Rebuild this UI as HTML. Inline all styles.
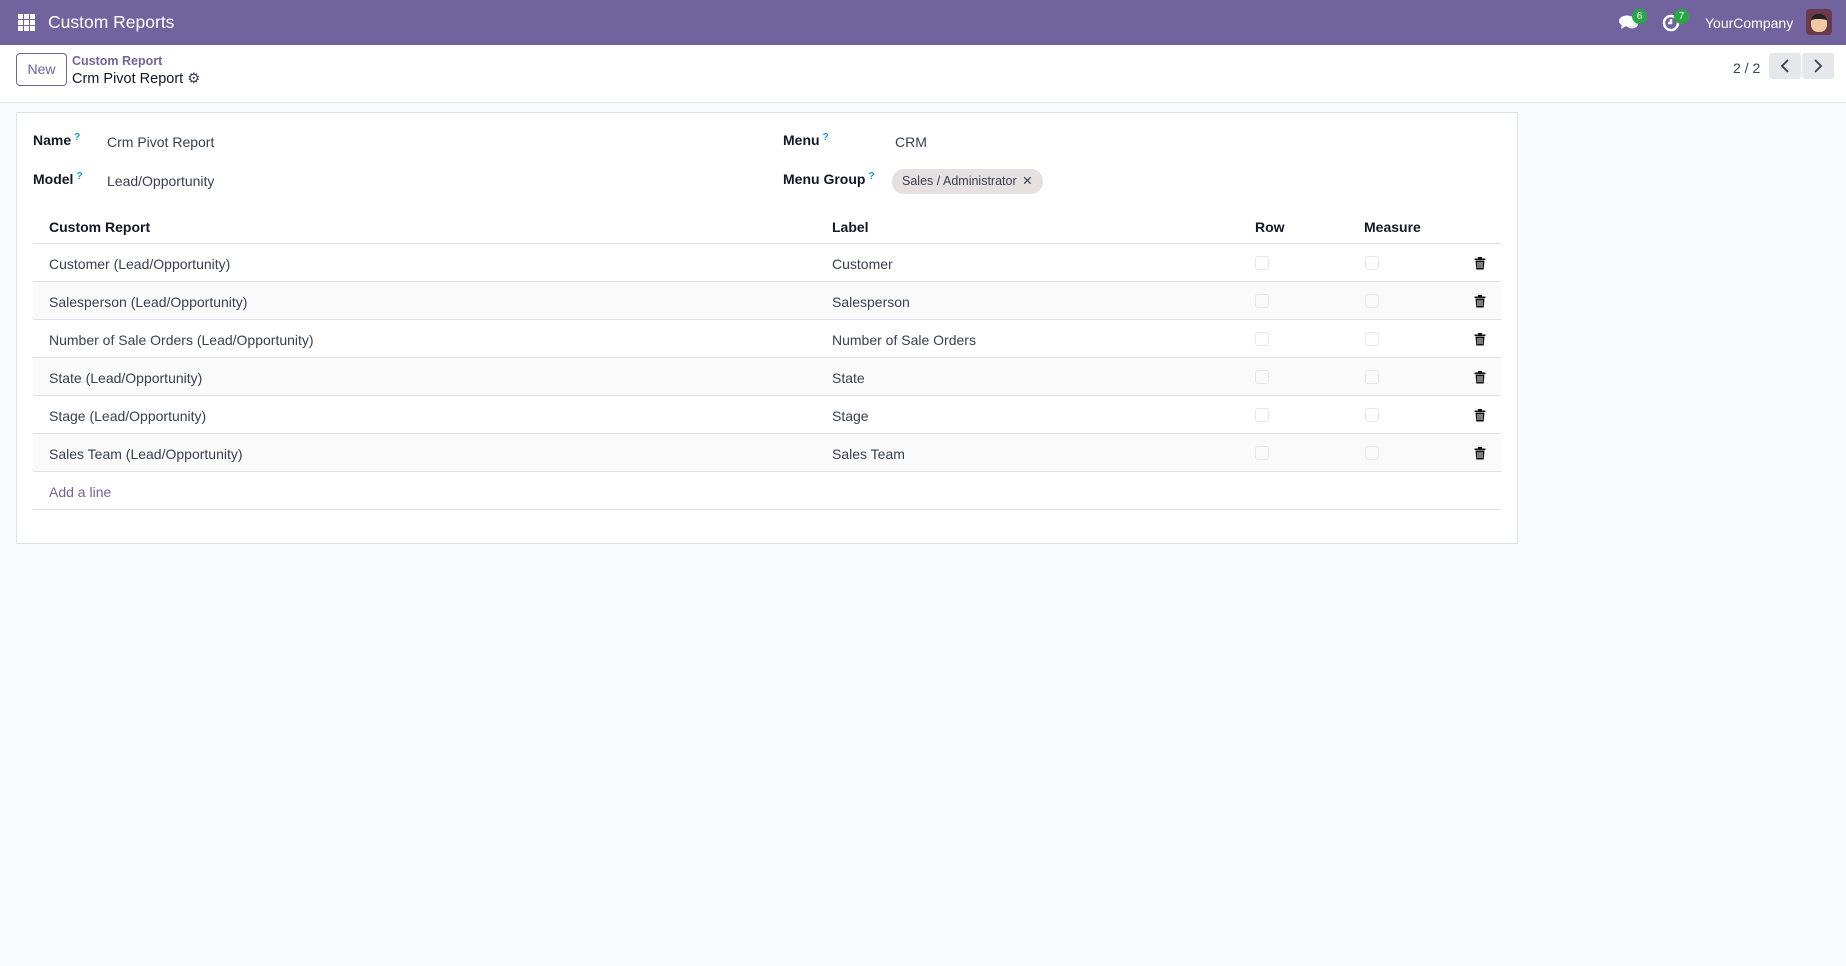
<!DOCTYPE html>
<html><head><meta charset="utf-8"><style>
*{box-sizing:border-box;margin:0;padding:0}
body{width:1846px;height:966px;background:#f9fafb;font-family:"Liberation Sans",sans-serif;color:#374151;font-size:14px;position:relative;overflow:hidden}
.nav{position:absolute;left:0;top:0;width:1846px;height:45px;background:#71639e;color:#fff}
.abs{position:absolute}
.cp{position:absolute;left:0;top:45px;width:1846px;height:58px;background:#fff;border-bottom:1px solid #e5e7eb}
.card{position:absolute;left:16px;top:112px;width:1502px;height:432px;background:#fff;border:1px solid #dee2e6}
.lbl{font-weight:bold;color:#111827;font-size:14px}
.q{color:#0b9bd1;font-size:10px;vertical-align:top;margin-left:3px}
.row{position:absolute;left:33px;width:1468px;height:38px;border-bottom:1px solid #dee2e6}
.row span{position:absolute;top:12px}
.cb{position:absolute;top:12px;width:14px;height:14px;border:1px solid #e5e7eb;border-radius:3px}
.tr{position:absolute;left:1441px;top:12px}
.badge{position:absolute;background:#28a745;color:#fff;font-size:10px;border-radius:8px;width:15px;height:15px;text-align:center;line-height:15px}
.pg{position:absolute;top:53px;width:32px;height:26px;background:#e5e7eb;border-radius:3px}
</style></head><body>
<svg width="0" height="0" style="position:absolute"><defs><symbol id="t" viewBox="0 0 12 14"><path d="M4 1h4v1.5H4z M0.5 2.5h11v1.5h-11z M1.5 4.5h9l-0.8 9h-7.4z" fill="#111"/><path d="M4 6v6M6 6v6M8 6v6" stroke="#fff" stroke-width="0.9"/></symbol></defs></svg>
<div class="nav">
 <svg class="abs" style="left:18px;top:14px" width="17" height="17" viewBox="0 0 17 17" fill="#fff"><rect x="0" y="0" width="5" height="5"/><rect x="6" y="0" width="5" height="5"/><rect x="12" y="0" width="5" height="5"/><rect x="0" y="6" width="5" height="5"/><rect x="6" y="6" width="5" height="5"/><rect x="12" y="6" width="5" height="5"/><rect x="0" y="12" width="5" height="5"/><rect x="6" y="12" width="5" height="5"/><rect x="12" y="12" width="5" height="5"/></svg>
 <div class="abs" style="left:48px;top:12px;font-size:17.5px">Custom Reports</div>
 <svg class="abs" style="left:1619px;top:14px" width="20" height="17" viewBox="0 0 20 17" fill="#fff"><ellipse cx="8" cy="7" rx="8" ry="5.5"/><path d="M3 10 L2 15 L7 12Z"/><ellipse cx="13" cy="10" rx="6" ry="4.5" opacity=".85"/></svg>
 <div class="badge" style="left:1632px;top:9px">6</div>
 <svg class="abs" style="left:1662px;top:14px" width="18" height="18" viewBox="0 0 18 18" fill="none" stroke="#fff" stroke-width="2.5"><circle cx="9" cy="9" r="7"/><path d="M9 5v4h-3"/></svg>
 <div class="badge" style="left:1674px;top:9px">7</div>
 <div class="abs" style="left:1705px;top:15px;font-size:14px">YourCompany</div>
 <div class="abs" style="left:1806px;top:9px;width:26px;height:26px;border-radius:4px;background:#6b3a4a"><div style="margin:5px auto 0;width:16px;height:18px;border-radius:7px;background:#f1c9a5;border-top:5px solid #222"></div></div>
</div>
<div class="cp">
 <div class="abs" style="left:16px;top:8px;width:51px;height:33px;border:1px solid #71639e;border-radius:4px;color:#71639e;text-align:center;line-height:31px;font-size:14px">New</div>
 <div class="abs" style="left:72px;top:9px;color:#71639e;font-weight:bold;font-size:12.5px">Custom Report</div>
 <div class="abs" style="left:72px;top:26px;color:#111827;font-size:14.5px">Crm Pivot Report <span style="color:#374151">⚙</span></div>
 <div class="abs" style="left:1733px;top:15px;color:#374151;font-size:14px">2 / 2</div>
</div>
<div class="pg" style="left:1769px"><svg width="32" height="26" viewBox="0 0 32 26"><path d="M19 7l-6 6 6 6" fill="none" stroke="#374151" stroke-width="1.8"/></svg></div>
<div class="pg" style="left:1802px"><svg width="32" height="26" viewBox="0 0 32 26"><path d="M13 7l6 6-6 6" fill="none" stroke="#374151" stroke-width="1.8"/></svg></div>
<div class="card"></div>
<div class="abs lbl" style="left:33px;top:132px">Name<span class="q">?</span></div>
<div class="abs" style="left:107px;top:134px">Crm Pivot Report</div>
<div class="abs lbl" style="left:33px;top:171px">Model<span class="q">?</span></div>
<div class="abs" style="left:107px;top:173px">Lead/Opportunity</div>
<div class="abs lbl" style="left:783px;top:132px">Menu<span class="q">?</span></div>
<div class="abs" style="left:895px;top:134px">CRM</div>
<div class="abs lbl" style="left:783px;top:171px">Menu Group<span class="q">?</span></div>
<div class="abs" style="left:892px;top:169px;width:151px;height:25px;border-radius:12px;background:#e7e0e0;font-size:12.5px;color:#374151;line-height:25px;padding-left:10px">Sales / Administrator <span style="margin-left:2px">✕</span></div>
<div class="row" style="top:206px;height:38px"><span class="lbl" style="left:16px;top:13px">Custom Report</span><span class="lbl" style="left:799px;top:13px">Label</span><span class="lbl" style="left:1222px;top:13px">Row</span><span class="lbl" style="left:1331px;top:13px">Measure</span></div>
<div class="row" style="top:244px"><span style="left:16px">Customer (Lead/Opportunity)</span><span style="left:799px">Customer</span><i class="cb" style="left:1222px"></i><i class="cb" style="left:1332px"></i><svg class="tr" width="12" height="14"><use href="#t"/></svg></div>
<div class="row" style="top:282px;background:#fafafa"><span style="left:16px">Salesperson (Lead/Opportunity)</span><span style="left:799px">Salesperson</span><i class="cb" style="left:1222px"></i><i class="cb" style="left:1332px"></i><svg class="tr" width="12" height="14"><use href="#t"/></svg></div>
<div class="row" style="top:320px"><span style="left:16px">Number of Sale Orders (Lead/Opportunity)</span><span style="left:799px">Number of Sale Orders</span><i class="cb" style="left:1222px"></i><i class="cb" style="left:1332px"></i><svg class="tr" width="12" height="14"><use href="#t"/></svg></div>
<div class="row" style="top:358px;background:#fafafa"><span style="left:16px">State (Lead/Opportunity)</span><span style="left:799px">State</span><i class="cb" style="left:1222px"></i><i class="cb" style="left:1332px"></i><svg class="tr" width="12" height="14"><use href="#t"/></svg></div>
<div class="row" style="top:396px"><span style="left:16px">Stage (Lead/Opportunity)</span><span style="left:799px">Stage</span><i class="cb" style="left:1222px"></i><i class="cb" style="left:1332px"></i><svg class="tr" width="12" height="14"><use href="#t"/></svg></div>
<div class="row" style="top:434px;background:#fafafa"><span style="left:16px">Sales Team (Lead/Opportunity)</span><span style="left:799px">Sales Team</span><i class="cb" style="left:1222px"></i><i class="cb" style="left:1332px"></i><svg class="tr" width="12" height="14"><use href="#t"/></svg></div>
<div class="row" style="top:472px"><span style="left:16px;color:#71639e">Add a line</span></div>
</body></html>
